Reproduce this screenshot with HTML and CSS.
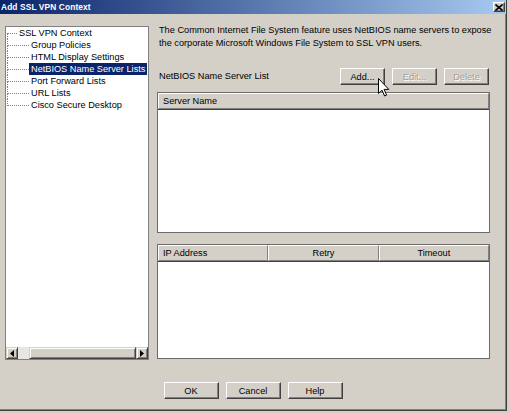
FILE: index.html
```html
<!DOCTYPE html>
<html>
<head>
<meta charset="utf-8">
<title>Add SSL VPN Context</title>
<link rel="stylesheet" href="styles.css">
</head>
<body>
<div class="window">
  <div class="titlebar">
    <span class="title">Add SSL VPN Context</span>
    <span class="close"><svg width="8" height="7" viewBox="0 0 8 7"><path d="M0.5 0.5 L7.5 6.5 M7.5 0.5 L0.5 6.5" stroke="#000" stroke-width="1.6"/></svg></span>
  </div>
  <div class="content">
    <div class="tree-panel">
      <div class="tree">
        <div class="row root"><span class="conn-root"></span><span class="label">SSL VPN Context</span></div>
        <div class="row child"><span class="conn"></span><span class="label">Group Policies</span></div>
        <div class="row child"><span class="conn"></span><span class="label">HTML Display Settings</span></div>
        <div class="row child"><span class="conn"></span><span class="label selected">NetBIOS Name Server Lists</span></div>
        <div class="row child"><span class="conn"></span><span class="label">Port Forward Lists</span></div>
        <div class="row child"><span class="conn"></span><span class="label">URL Lists</span></div>
        <div class="row child last"><span class="conn"></span><span class="label">Cisco Secure Desktop</span></div>
      </div>
      <div class="hscroll">
        <span class="sb-btn"><svg width="4" height="7" viewBox="0 0 4 7"><path d="M4 0 L0 3.5 L4 7 Z" fill="#000"/></svg></span>
        <span class="sb-track"><span class="sb-thumb"></span></span>
        <span class="sb-btn"><svg width="4" height="7" viewBox="0 0 4 7"><path d="M0 0 L4 3.5 L0 7 Z" fill="#000"/></svg></span>
      </div>
    </div>
    <div class="right">
      <p class="desc">The Common Internet File System feature uses NetBIOS name servers to expose<br>the corporate Microsoft Windows File System to SSL VPN users.</p>
      <div class="toolbar">
        <span class="tb-label">NetBIOS Name Server List</span>
        <div class="tb-buttons">
          <button class="btn">Add...</button>
          <button class="btn disabled">Edit...</button>
          <button class="btn disabled">Delete</button>
        </div>
      </div>
      <div class="table t1">
        <div class="thead one"><div class="th left">Server Name</div></div>
        <div class="tbody"></div>
      </div>
      <div class="table t2">
        <div class="thead three">
          <div class="th left">IP Address</div>
          <div class="th">Retry</div>
          <div class="th">Timeout</div>
        </div>
        <div class="tbody"></div>
      </div>
    </div>
  </div>
  <div class="footer">
    <button class="btn wide">OK</button>
    <button class="btn wide">Cancel</button>
    <button class="btn wide">Help</button>
  </div>
</div>
<svg class="cursor" width="12" height="19" viewBox="0 0 12 19"><path d="M0.5 0.5 L0.5 15.5 L4 12.2 L6.6 18 L8.6 17.1 L6.1 11.4 L10.8 11.4 Z" fill="#fff" stroke="#000" stroke-width="1" stroke-linejoin="miter"/></svg>
</body>
</html>
```
FILE: styles.css
```css
html, body {
  margin: 0;
  padding: 0;
  background: #d4d0c8;
}
body {
  width: 509px;
  height: 413px;
  overflow: hidden;
  font-family: "Liberation Sans", Arial, sans-serif;
  font-size: 9.2px;
  color: #000;
}
.window {
  width: 507px;
  height: 411px;
  box-sizing: border-box;
  border-right: 1px solid #404040;
  border-bottom: 1px solid #404040;
  box-shadow: inset -1px -1px 0 #808080;
  background: #d4d0c8;
}
.titlebar {
  height: 14px;
  display: flex;
  align-items: center;
  justify-content: space-between;
  padding: 0 1px 0 1px;
  background: linear-gradient(to right, #0a246a, #a6caf0);
}
.title {
  color: #fff;
  font-weight: bold;
  font-size: 8.4px;
  letter-spacing: 0.1px;
}
.close {
  width: 12px;
  height: 10px;
  box-sizing: border-box;
  display: flex;
  align-items: center;
  justify-content: center;
  background: #d4d0c8;
  border: 1px solid;
  border-color: #fff #404040 #404040 #fff;
  box-shadow: inset -1px -1px 0 #808080;
}
.content {
  display: flex;
  align-items: flex-start;
  gap: 8px;
  padding: 12px 0 0 5px;
}
.tree-panel {
  width: 144px;
  height: 334px;
  box-sizing: border-box;
  border: 1px solid #808080;
  background: #fff;
  display: flex;
  flex-direction: column;
  justify-content: space-between;
}
.row {
  height: 12px;
  display: flex;
  align-items: stretch;
}
.label {
  padding: 0 2px;
  line-height: 12px;
  white-space: nowrap;
}
.label.selected {
  background: #0a246a;
  color: #fff;
}
.conn-root {
  width: 10px;
  margin-left: 1px;
  display: flex;
  flex-direction: column;
}
.conn-root::before {
  content: "";
  height: 6px;
  border-bottom: 1px dotted #808080;
}
.conn-root::after {
  content: "";
  flex: 1;
  border-left: 1px dotted #808080;
}
.conn {
  width: 22px;
  margin-left: 1px;
  display: flex;
  flex-direction: column;
}
.conn::before {
  content: "";
  height: 6px;
  border-left: 1px dotted #808080;
  border-bottom: 1px dotted #808080;
}
.conn::after {
  content: "";
  flex: 1;
  border-left: 1px dotted #808080;
}
.row.last .conn::after {
  border-left-color: transparent;
}
.hscroll {
  height: 12px;
  display: flex;
  background: #d4d0c8;
}
.sb-btn {
  width: 12px;
  height: 12px;
  box-sizing: border-box;
  display: flex;
  align-items: center;
  justify-content: center;
  border: 1px solid;
  border-color: #d4d0c8 #404040 #404040 #d4d0c8;
  box-shadow: inset 1px 1px 0 #fff, inset -1px -1px 0 #808080;
  background: #d4d0c8;
}
.sb-track {
  flex: 1;
  display: flex;
  padding-left: 11px;
  background: #e8e6e1;
}
.sb-thumb {
  flex: 1;
  box-sizing: border-box;
  border: 1px solid;
  border-color: #d4d0c8 #404040 #404040 #d4d0c8;
  box-shadow: inset 1px 1px 0 #fff, inset -1px -1px 0 #808080;
  background: #d4d0c8;
}
.right {
  width: 333px;
  margin-top: -2px;
  display: flex;
  flex-direction: column;
}
.desc {
  margin: 0 0 0 2px;
  line-height: 13px;
  white-space: nowrap;
}
.toolbar {
  margin-top: 18px;
  height: 17px;
  display: flex;
  align-items: center;
  justify-content: space-between;
}
.tb-label {
  padding-left: 2px;
  padding-bottom: 2px;
}
.tb-buttons {
  display: flex;
  gap: 7px;
  margin-right: 1px;
}
.btn {
  width: 45px;
  height: 17px;
  box-sizing: border-box;
  padding: 0;
  margin: 0;
  font-family: inherit;
  font-size: 9.2px;
  color: #000;
  background: #d4d0c8;
  border: 1px solid;
  border-color: #fff #404040 #404040 #fff;
  box-shadow: inset -1px -1px 0 #808080;
  border-radius: 0;
}
.btn.disabled {
  color: #a09d96;
  text-shadow: 1px 1px 0 #fff;
}
.btn.wide {
  width: 55px;
}
.table {
  box-sizing: border-box;
  border: 1px solid #6c6c6c;
  background: #fff;
  display: flex;
  flex-direction: column;
}
.t1 {
  margin-top: 7px;
  height: 141px;
}
.t2 {
  margin-top: 11px;
  height: 115px;
}
.thead {
  display: grid;
  height: 17px;
  background: #d4d0c8;
  border-bottom: 1px solid #404040;
  box-sizing: border-box;
}
.thead.one {
  grid-template-columns: 1fr;
}
.thead.three {
  grid-template-columns: 1fr 1fr 1fr;
}
.th {
  box-sizing: border-box;
  border: 1px solid;
  border-color: #fff #808080 #808080 #fff;
  line-height: 14px;
  text-align: center;
  white-space: nowrap;
}
.th.left {
  text-align: left;
  padding-left: 4px;
}
.tbody {
  flex: 1;
  background: #fff;
}
.footer {
  margin-top: 22px;
  display: flex;
  justify-content: center;
  gap: 7px;
}
.cursor {
  position: absolute;
  left: 378px;
  top: 78px;
}
```
